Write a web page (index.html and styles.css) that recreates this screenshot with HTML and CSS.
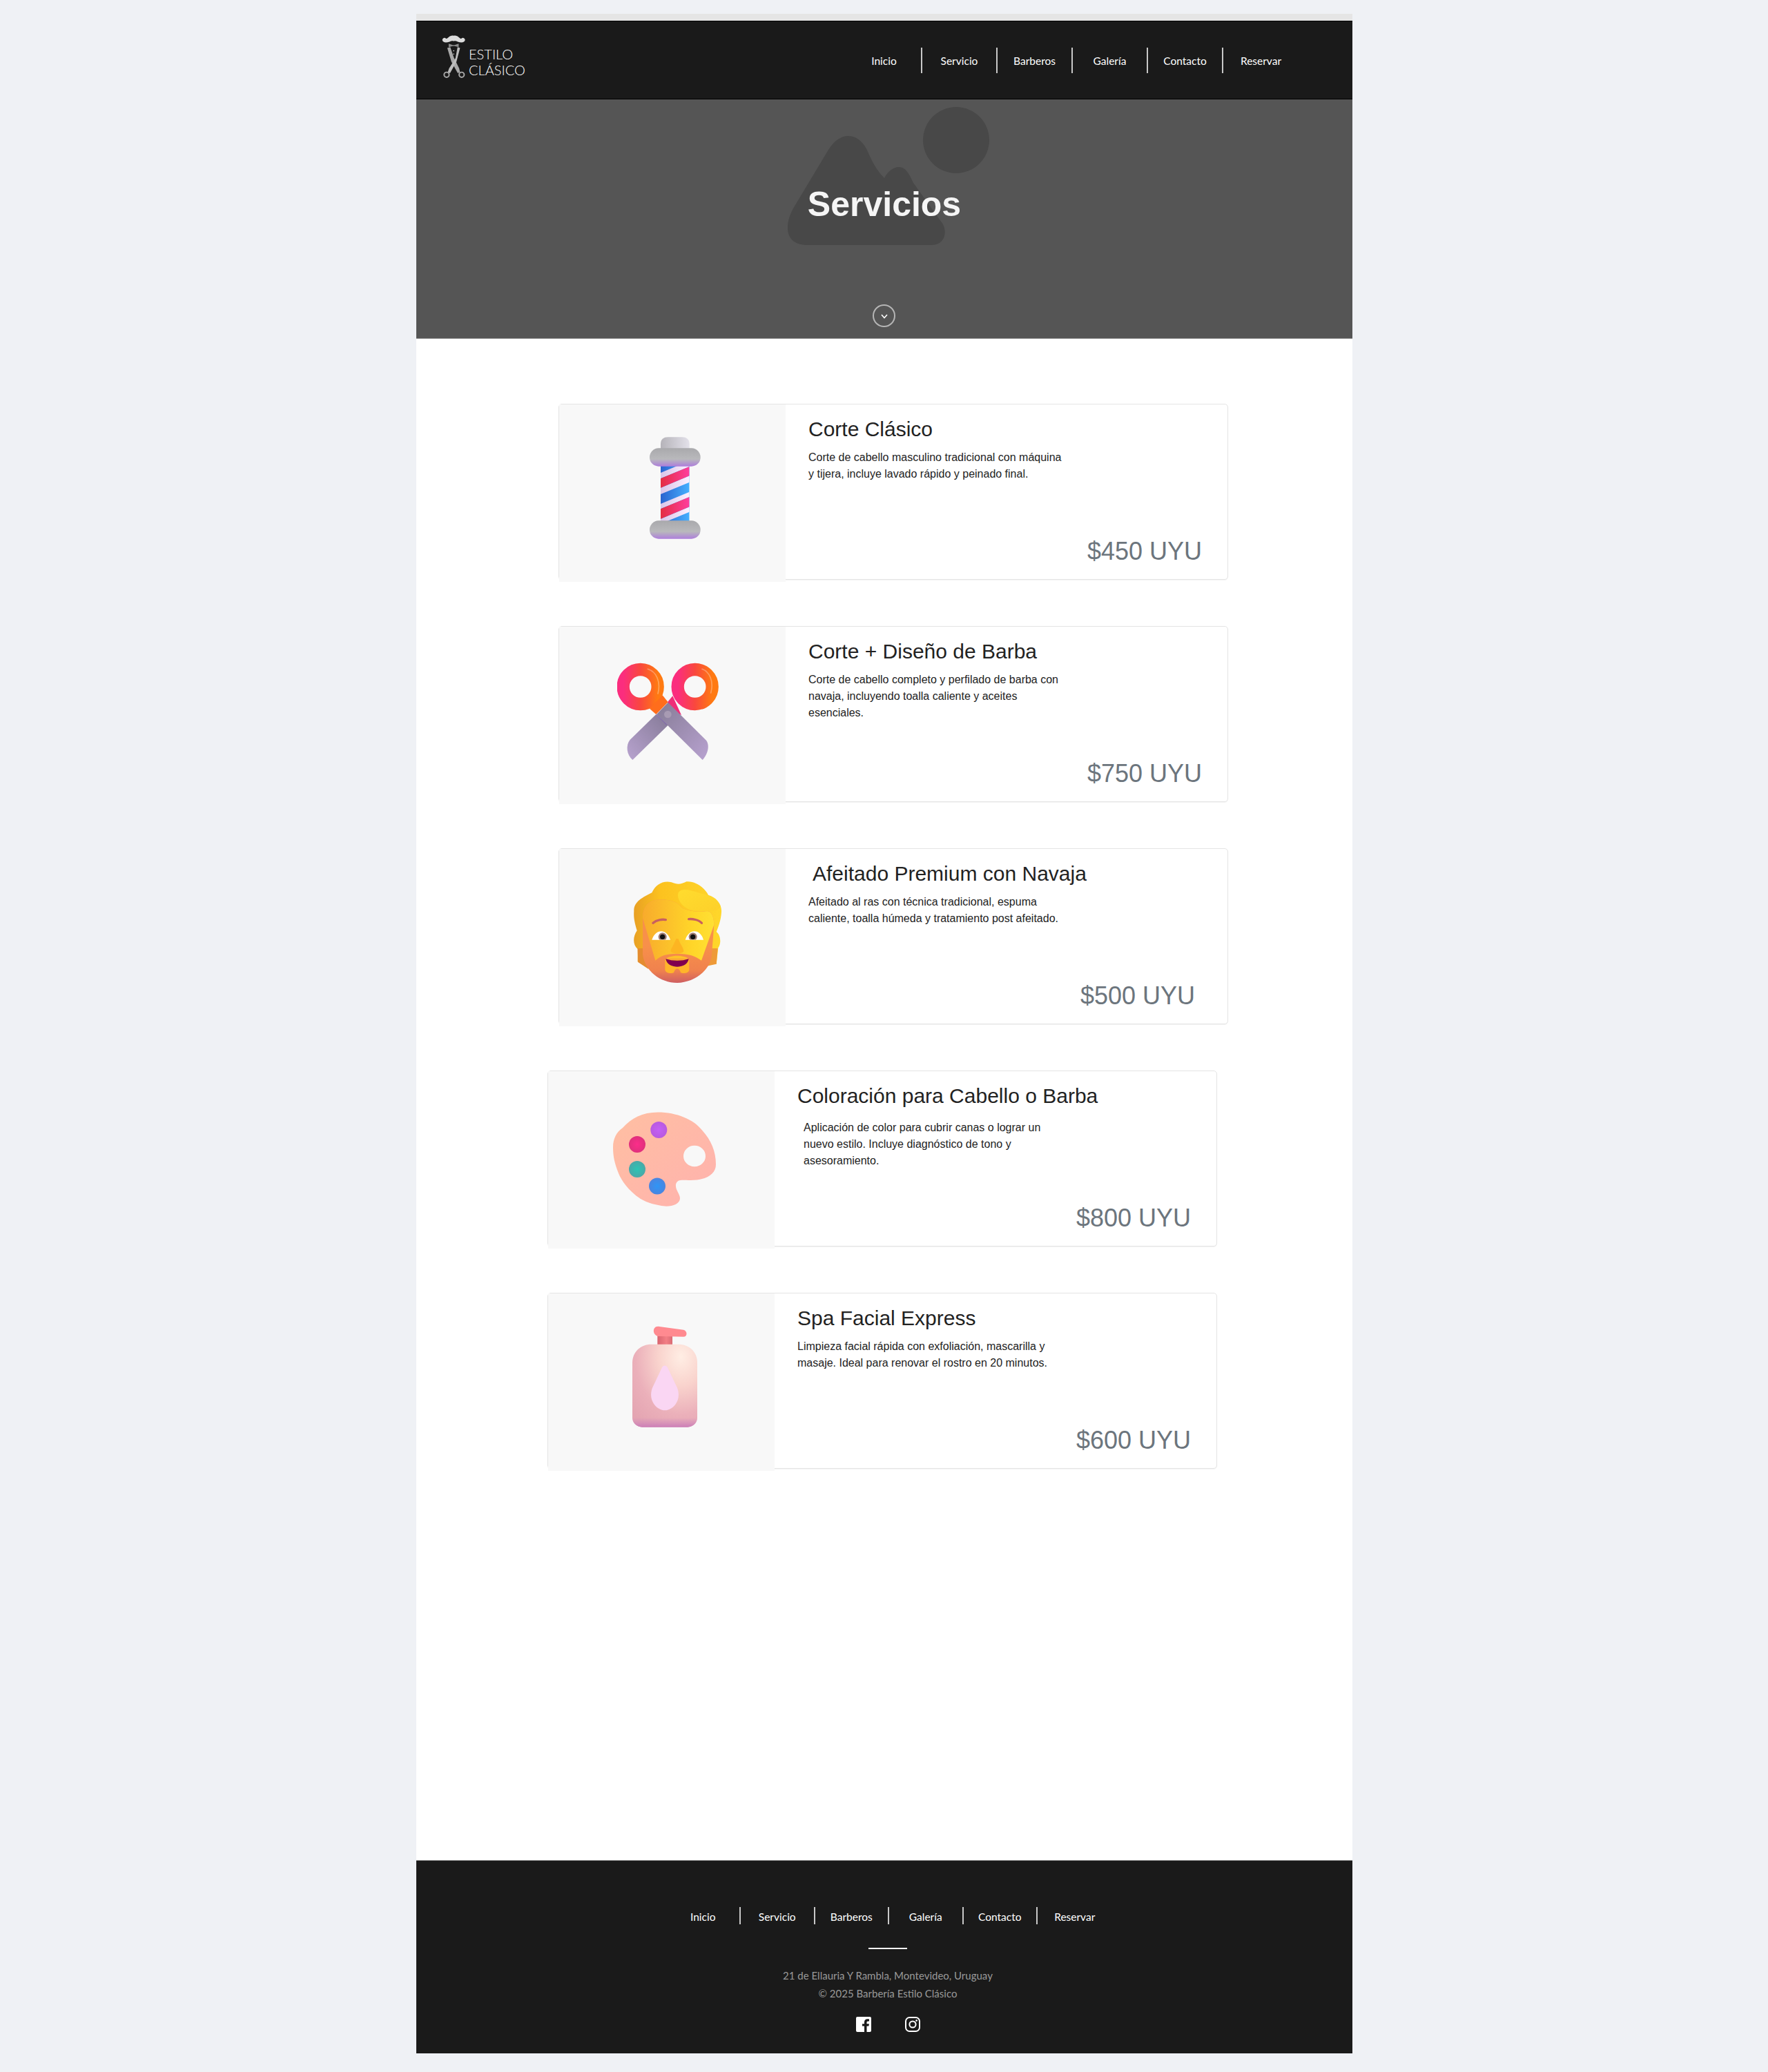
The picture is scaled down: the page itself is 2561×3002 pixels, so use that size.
FILE: index.html
```html
<!DOCTYPE html>
<html lang="es">
<head>
    <meta charset="UTF-8">
    <meta name="viewport" content="width=device-width, initial-scale=1.0">
    <title>Servicios</title>
    <link rel="stylesheet" href="styles.css">
</head>
<body>
    <div class="page">
        <header class="site-header">
            <a class="brand" href="#">
                <svg class="brand-mark" viewBox="60 58 106 194" aria-hidden="true">
                    <path fill="#dcdcdc" d="M62 80C66 68 74 70 78 74C86 78 92 58 112 62C132 58 138 78 146 74C150 70 158 68 162 80C160 92 146 94 130 88C122 84 116 84 112 86C108 84 102 84 94 88C78 94 64 92 62 80Z"/>
                    <path fill="#8c8c8c" d="M90 97L108 103L116 103L134 97L134 112L116 107L108 107L90 112Z"/>
                    <path fill="#a8a8a8" d="M84 116L97 112L113 158L136 205L140 222L130 226L102 176Z"/>
                    <path fill="#bdbdbd" d="M140 116L129 112L120 160L92 205L86 222L96 226L124 176Z"/>
                    <circle cx="112" cy="128" r="2.5" fill="#dcdcdc"/>
                    <circle cx="112" cy="142" r="2.5" fill="#dcdcdc"/>
                    <circle cx="81" cy="233" r="11" fill="none" stroke="#a8a8a8" stroke-width="6"/>
                    <circle cx="147" cy="233" r="11" fill="none" stroke="#a8a8a8" stroke-width="6"/>
                </svg>
                <span class="brand-name">ESTILO<br>CLÁSICO</span>
            </a>
            <nav class="main-nav">
                <a href="#">Inicio</a>
                <a href="#">Servicio</a>
                <a href="#">Barberos</a>
                <a href="#">Galería</a>
                <a href="#">Contacto</a>
                <a href="#">Reservar</a>
            </nav>
        </header>

        <section class="hero">
            <svg class="hero-placeholder" viewBox="1130 150 310 210" aria-hidden="true">
                <path d="M1170 355C1150 355 1141 345 1141 330C1141 318 1145 310 1149 302L1200 217C1208 204 1218 197 1229 197C1242 197 1252 207 1258 222C1266 240 1273 250 1281 258C1285 250 1293 242 1302 242C1312 242 1317 252 1323 265L1366 325C1373 340 1366 355 1350 355Z"/>
                <ellipse cx="1385" cy="203" rx="48" ry="48"/>
            </svg>
            <h1>Servicios</h1>
            <a class="scroll-down" href="#servicios" aria-label="Bajar">
                <svg viewBox="0 0 16 16"><polyline points="4,6 8,10.5 12,6"/></svg>
            </a>
        </section>

        <main class="services" id="servicios">
            <article class="card card-shift">
                <div class="card-img">
                    <svg viewBox="99 45 480 480" aria-hidden="true">
                        <defs>
                            <linearGradient id="capG" x1="0" x2="1" y1="0" y2="0"><stop offset="0" stop-color="#b5b3b9"/><stop offset="1" stop-color="#e3e1ea"/></linearGradient>
                            <linearGradient id="ringG" x1="0" x2="0" y1="0" y2="1"><stop offset="0" stop-color="#a9a9ac"/><stop offset=".6" stop-color="#b9b9bc"/><stop offset="1" stop-color="#ad7edb"/></linearGradient>
                            <linearGradient id="blueG" x1="0" x2="1" y1="0" y2="0"><stop offset="0" stop-color="#2b63cf"/><stop offset="1" stop-color="#46b0ff"/></linearGradient>
                            <linearGradient id="redG" x1="0" x2="1" y1="0" y2="0"><stop offset="0" stop-color="#e32d42"/><stop offset="1" stop-color="#ff3d9e"/></linearGradient>
                            <linearGradient id="paleG" x1="0" x2="1" y1="0" y2="0"><stop offset="0" stop-color="#d9c5e8"/><stop offset="1" stop-color="#fdf0ff"/></linearGradient>
                            <clipPath id="shaftClip"><rect x="288" y="190" width="125" height="250"/></clipPath>
                        </defs>
                        <path fill="url(#capG)" d="M288 125V100C288 80 300 70 320 70H381C401 70 413 80 413 100V125Z"/>
                        <g clip-path="url(#shaftClip)">
                            <rect x="288" y="190" width="125" height="250" fill="url(#blueG)"/>
                            <path fill="url(#paleG)" d="M288 225L413 173V198L288 250ZM288 290L413 238V266L288 318ZM288 360L413 308V330L288 382ZM288 425L413 373V395L288 447Z"/>
                            <path fill="url(#redG)" d="M288 250L413 198V238L288 290ZM288 382L413 330V373L288 425Z"/>
                        </g>
                        <rect x="240" y="118" width="221" height="79" rx="39" fill="url(#ringG)"/>
                        <rect x="240" y="433" width="221" height="79" rx="39" fill="url(#ringG)"/>
                    </svg>
                </div>
                <div class="card-body">
                    <h3>Corte Clásico</h3>
                    <p class="desc">Corte de cabello masculino tradicional con máquina y tijera, incluye lavado rápido y peinado final.</p>
                    <p class="price">$450 UYU</p>
                </div>
            </article>

            <article class="card card-shift">
                <div class="card-img">
                    <svg viewBox="99 51 480 480" aria-hidden="true">
                        <defs>
                            <linearGradient id="handleG" x1="0" x2="1" y1="0" y2="0"><stop offset="0" stop-color="#fb2d7e"/><stop offset=".5" stop-color="#f9483e"/><stop offset="1" stop-color="#ff7a12"/></linearGradient>
                            <linearGradient id="bladeL" x1="1" x2="0" y1="0" y2="1"><stop offset="0" stop-color="#857a97"/><stop offset="1" stop-color="#b8a3cf"/></linearGradient>
                            <linearGradient id="bladeR" x1="0" x2="1" y1="0" y2="1"><stop offset="0" stop-color="#857b95"/><stop offset="1" stop-color="#b8a2d0"/></linearGradient>
                        </defs>
                        <path fill="#ef2e78" d="M340 235L378 318L335 300L318 262Z"/>
                        <circle cx="200" cy="195" r="75" fill="none" stroke="url(#handleG)" stroke-width="55"/>
                        <circle cx="437" cy="195" r="75" fill="none" stroke="url(#handleG)" stroke-width="55"/>
                        <path fill="none" stroke="#fff" stroke-opacity=".3" stroke-width="5" stroke-linecap="round" d="M232 118C268 130 290 170 276 225M468 118C500 130 520 170 506 222"/>
                        <path fill="#ff6d1c" d="M296 232L320 262L268 315L240 290Z"/>
                        <path fill="url(#bladeR)" d="M320 263L486 428C498 442 500 480 470 513L270 315Z"/>
                        <path fill="url(#bladeL)" d="M268 315L320 362L166 513C140 490 135 450 155 425Z"/>
                        <path fill="none" stroke="#7c5fb0" stroke-width="3" d="M270 316L314 360"/>
                        <circle cx="319" cy="315" r="16" fill="#a89bb3"/>
                    </svg>
                </div>
                <div class="card-body">
                    <h3>Corte + Diseño de Barba</h3>
                    <p class="desc">Corte de cabello completo y perfilado de barba con navaja, incluyendo toalla caliente y aceites esenciales.</p>
                    <p class="price">$750 UYU</p>
                </div>
            </article>

            <article class="card card-shift">
                <div class="card-img">
                    <svg viewBox="39 57 480 480" aria-hidden="true">
                        <defs>
                            <linearGradient id="hairG" x1="0" x2="1" y1="0" y2="0"><stop offset="0" stop-color="#e8a024"/><stop offset=".3" stop-color="#fcc21f"/><stop offset="1" stop-color="#ffd72b"/></linearGradient>
                            <linearGradient id="lockG" x1="0" x2="1" y1="0" y2="1"><stop offset="0" stop-color="#ffdc2e"/><stop offset="1" stop-color="#fdd02a"/></linearGradient>
                            <linearGradient id="beardG" x1="0" x2="0" y1="0" y2="1"><stop offset=".55" stop-color="#f8904a"/><stop offset=".85" stop-color="#f0824e"/><stop offset="1" stop-color="#cf5f62"/></linearGradient>
                            <linearGradient id="skinG" x1="0" x2="1" y1="0" y2="0"><stop offset="0" stop-color="#f8ab2c"/><stop offset=".7" stop-color="#ffd629"/><stop offset="1" stop-color="#ffe033"/></linearGradient>
                            <clipPath id="eyeL"><path d="M190 335C205 285 255 285 270 335Z"/></clipPath>
                            <clipPath id="eyeR"><path d="M335 335C350 285 400 285 414 335Z"/></clipPath>
                        </defs>
                        <path fill="url(#hairG)" d="M112 210C110 170 150 150 190 130C205 95 240 75 275 85C300 95 315 95 340 82C380 78 420 110 435 140C470 150 495 180 492 215C490 250 478 280 470 300C485 310 495 345 478 370L470 440L430 440L180 460L128 430L128 375C105 355 108 320 125 295C115 260 110 240 112 210Z"/>
                        <path fill="#e48c30" d="M128 372L155 372L175 462L130 432Z"/>
                        <path fill="#ee9a38" d="M445 372L476 372L470 440L425 450Z"/>
                        <path fill="url(#beardG)" d="M150 240C150 190 175 160 230 160C270 160 300 170 320 195C345 212 400 215 430 210C450 210 460 240 460 270L450 400C445 470 370 522 300 522C225 522 160 470 150 400Z"/>
                        <path fill="url(#skinG)" d="M150 240C150 190 175 160 230 160C270 160 300 170 320 195C345 212 400 215 430 210C450 210 460 240 460 270L405 425C380 405 350 395 300 395C250 395 225 405 205 425Z"/>
                        <path fill="url(#lockG)" d="M305 130C315 110 350 115 390 130C430 140 470 150 488 190C480 215 430 210 400 210C360 212 330 195 315 175C305 160 300 145 305 130Z"/>
                        <path fill="#ffb52a" d="M247 420L247 465C250 482 275 482 285 478C290 455 310 455 315 478C325 482 350 482 352 465L352 420Z"/>
                        <path fill="#ffc028" d="M250 418C270 400 330 400 350 418Z"/>
                        <path fill="#80004f" d="M250 418C280 428 320 428 350 418C345 445 320 452 300 452C280 452 255 445 250 418Z"/>
                        <path fill="none" stroke="#c8605f" stroke-width="10" stroke-linecap="round" d="M195 262C210 248 235 245 250 248M350 245C365 243 395 248 406 262"/>
                        <path fill="#fff" d="M190 335C205 285 255 285 270 335Z"/>
                        <path fill="#fff" d="M335 335C350 285 400 285 414 335Z"/>
                        <g clip-path="url(#eyeL)"><circle cx="236" cy="322" r="18" fill="#9c7a70"/><circle cx="236" cy="322" r="11" fill="#111"/></g>
                        <g clip-path="url(#eyeR)"><circle cx="368" cy="322" r="18" fill="#9c7a70"/><circle cx="368" cy="322" r="11" fill="#111"/></g>
                        <path fill="#fdb522" d="M295 330C285 360 270 375 272 385C280 398 320 398 328 385C328 370 310 350 305 330Z"/>
                    </svg>
                </div>
                <div class="card-body">
                    <h3 class="title-nudge">Afeitado Premium con Navaja</h3>
                    <p class="desc">Afeitado al ras con técnica tradicional, espuma caliente, toalla húmeda y tratamiento post afeitado.</p>
                    <p class="price price-nudge">$500 UYU</p>
                </div>
            </article>

            <article class="card">
                <div class="card-img">
                    <svg viewBox="878 1591 160 160" aria-hidden="true">
                        <defs>
                            <linearGradient id="paletteG" x1="0" x2="1" y1="0" y2="1"><stop offset="0" stop-color="#ffbfa2"/><stop offset="1" stop-color="#ffb2ae"/></linearGradient>
                            <radialGradient id="dotP"><stop offset="0" stop-color="#c45ff5"/><stop offset="1" stop-color="#b85ae0"/></radialGradient>
                            <radialGradient id="dotK"><stop offset="0" stop-color="#fb2d8a"/><stop offset="1" stop-color="#e0307c"/></radialGradient>
                            <radialGradient id="dotT"><stop offset="0" stop-color="#2cc4b4"/><stop offset="1" stop-color="#4aa8a8"/></radialGradient>
                            <radialGradient id="dotB"><stop offset="0" stop-color="#2f95f5"/><stop offset="1" stop-color="#4a85e0"/></radialGradient>
                        </defs>
                        <path fill="url(#paletteG)" fill-rule="evenodd" d="M953 1611.6C980 1611.6 1005 1622 1017 1637.6C1030 1652 1037 1668 1037 1687C1037 1702 1022 1710 1000 1710C988 1710 981 1708 979 1716C978 1724 985 1730 985 1736C985 1744 975 1748 963 1747.6C950 1746 938 1743 928 1737C910 1725 900 1710 896 1700C890 1685 888 1675 888 1662C888 1650 893 1640 902 1634C915 1620 930 1611.6 953 1611.6ZM1006 1659.7A16 15.3 0 1 0 1006 1690.3A16 15.3 0 1 0 1006 1659.7Z"/>
                        <circle cx="954.3" cy="1637" r="12" fill="url(#dotP)"/>
                        <circle cx="923" cy="1658" r="12" fill="url(#dotK)"/>
                        <circle cx="923" cy="1694" r="12" fill="url(#dotT)"/>
                        <circle cx="952" cy="1718.5" r="12" fill="url(#dotB)"/>
                    </svg>
                </div>
                <div class="card-body">
                    <h3>Coloración para Cabello o Barba</h3>
                    <p class="desc desc-nudge">Aplicación de color para cubrir canas o lograr un nuevo estilo. Incluye diagnóstico de tono y asesoramiento.</p>
                    <p class="price">$800 UYU</p>
                </div>
            </article>

            <article class="card">
                <div class="card-img">
                    <svg viewBox="54 39 480 480" aria-hidden="true">
                        <defs>
                            <linearGradient id="neckG" x1="0" x2="1" y1="0" y2="0"><stop offset="0" stop-color="#d8646f"/><stop offset=".6" stop-color="#f37f85"/><stop offset="1" stop-color="#d96b74"/></linearGradient>
                            <radialGradient id="soapG" cx=".75" cy=".15" r="1"><stop offset="0" stop-color="#ffeee4"/><stop offset=".35" stop-color="#f9d3cd"/><stop offset=".7" stop-color="#ebb0ba"/><stop offset="1" stop-color="#e4a5b2"/></radialGradient>
                            <linearGradient id="soapEdge" x1="0" x2="0" y1="0" y2="1"><stop offset="0" stop-color="#cc85bb" stop-opacity="0"/><stop offset="1" stop-color="#cc7fb8"/></linearGradient>
                        </defs>
                        <rect x="277" y="100" width="65" height="48" fill="url(#neckG)"/>
                        <path fill="#ff8a90" d="M280 65L390 80C408 84 408 110 390 110L285 108C255 108 252 65 280 65Z"/>
                        <path fill="url(#soapG)" d="M168 223C168 175 205 143 250 143H368C415 143 450 175 450 223V463C450 485 430 503 408 503H210C188 503 168 485 168 463Z"/>
                        <path fill="url(#soapEdge)" d="M168 462V463C168 485 188 503 210 503H408C430 503 450 485 450 463V462Z"/>
                        <path fill="#fad6f3" d="M297 244C303 233 315 233 321 244L362 330C385 385 345 430 309 430C273 430 233 385 256 330Z"/>
                    </svg>
                </div>
                <div class="card-body">
                    <h3>Spa Facial Express</h3>
                    <p class="desc">Limpieza facial rápida con exfoliación, mascarilla y masaje. Ideal para renovar el rostro en 20 minutos.</p>
                    <p class="price">$600 UYU</p>
                </div>
            </article>
        </main>

        <footer class="site-footer">
            <nav class="footer-nav">
                <a href="#">Inicio</a>
                <a href="#">Servicio</a>
                <a href="#">Barberos</a>
                <a href="#">Galería</a>
                <a href="#">Contacto</a>
                <a href="#">Reservar</a>
            </nav>
            <hr class="footer-rule">
            <p class="footer-text">21 de Ellauria Y Rambla, Montevideo, Uruguay</p>
            <p class="footer-text">© 2025 Barbería Estilo Clásico</p>
            <div class="social">
                <a href="#" aria-label="Facebook">
                    <svg viewBox="0 0 22 22"><path fill="#fff" d="M2 0H20A2 2 0 0 1 22 2V20A2 2 0 0 1 20 22H15.5V13.6H18.4L18.9 10.3H15.5V8.2C15.5 7.2 16 6.4 17.3 6.4H19V3.5C18.4 3.4 17.4 3.3 16.4 3.3C13.8 3.3 12 4.9 12 7.8V10.3H9V13.6H12V22H2A2 2 0 0 1 0 20V2A2 2 0 0 1 2 0Z"/></svg>
                </a>
                <a href="#" aria-label="Instagram">
                    <svg viewBox="0 0 22 22"><rect x="1" y="1" width="20" height="20" rx="5.5" fill="none" stroke="#fff" stroke-width="2"/><circle cx="11" cy="11" r="4.6" fill="none" stroke="#fff" stroke-width="2"/><circle cx="16.6" cy="5.4" r="1.3" fill="#fff"/></svg>
                </a>
            </div>
        </footer>
    </div>
</body>
</html>
```

FILE: styles.css
```css
body {
    margin: 0;
    background-color: #eff1f5;
    font-family: 'Liberation Sans', Arial, sans-serif;
    min-height: 3002px;
}

a {
    text-decoration: none;
}

.page {
    width: 1356px;
    margin: 20px 0 0 603px;
    border-top: 10px solid #e5e5e5;
    background-color: #fff;
}

/* header */
.site-header {
    display: flex;
    align-items: center;
    height: 112px;
    padding: 0 78px 0 37px;
    background-color: #1a1a1a;
    border-top: 1px solid #000;
    border-bottom: 1px solid #000;
}

.brand {
    display: flex;
    align-items: flex-end;
    gap: 4px;
    margin-top: -10px;
}

.brand-mark {
    width: 35px;
    height: 65px;
}

.brand-name {
    font-family: Lato, sans-serif;
    font-weight: 300;
    font-size: 20px;
    line-height: 23px;
    color: #fff;
    padding-bottom: 2px;
}

.main-nav {
    display: flex;
    margin-left: auto;
}

.main-nav a,
.footer-nav a {
    font-family: Lato, sans-serif;
    font-size: 15.5px;
    color: #fff;
    text-align: center;
    border-right: 2px solid #c8c8c8;
    box-sizing: border-box;
}

.main-nav a {
    width: 109px;
    height: 37px;
    line-height: 38px;
}

.main-nav a:last-child,
.footer-nav a:last-child {
    border-right: none;
}

/* hero */
.hero {
    position: relative;
    height: 347px;
    padding-top: 123px;
    box-sizing: border-box;
    background-color: #555;
    border-bottom: 1px solid #999;
    overflow: hidden;
}

.hero h1 {
    position: relative;
    margin: 0;
    font-size: 50px;
    line-height: 58px;
    font-weight: bold;
    color: #f5f5f5;
    text-align: center;
}

.hero-placeholder {
    position: absolute;
    left: 527px;
    top: 6px;
    width: 310px;
    height: 210px;
    fill: #484848;
}

.scroll-down {
    position: absolute;
    left: 661px;
    top: 297px;
    width: 33px;
    height: 33px;
    border: 2px solid #b5b5b5;
    border-radius: 50%;
    box-sizing: border-box;
    display: flex;
    align-items: center;
    justify-content: center;
}

.scroll-down svg {
    width: 16px;
    height: 16px;
    fill: none;
    stroke: #fff;
    stroke-width: 1.6;
}

/* service cards */
.services {
    display: flex;
    flex-direction: column;
    gap: 67px;
    height: 2204px;
    padding: 94px 0 0 190px;
    box-sizing: border-box;
}

.card {
    display: flex;
    width: 970px;
    height: 255px;
    box-sizing: border-box;
    border: 1px solid #e4e4e4;
    border-radius: 5px;
    box-shadow: 0 1px 1px rgba(0, 0, 0, 0.05);
}

.card-shift {
    margin-left: 16px;
}

.card-img {
    flex: 0 0 328px;
    height: 257px;
    padding-top: 39px;
    box-sizing: border-box;
    background-color: #f8f8f8;
    display: flex;
    justify-content: center;
    align-items: flex-start;
}

.card-img svg {
    width: 160px;
    height: 160px;
}

.card-body {
    flex: 1;
    display: flex;
    flex-direction: column;
    padding: 18px 37px 20px 33px;
    box-sizing: border-box;
}

.card-body h3 {
    margin: 0 0 11px;
    font-size: 30px;
    line-height: 36px;
    font-weight: normal;
    color: #222;
}

.desc {
    margin: 0;
    width: 372px;
    font-size: 16px;
    line-height: 24px;
    color: #222;
}

.price {
    margin: auto 0 0;
    font-size: 36px;
    line-height: 41px;
    color: #6c757d;
    text-align: right;
}

.title-nudge {
    margin-left: 6px !important;
}

.price-nudge {
    margin-right: 10px;
}

.desc-nudge {
    margin-left: 9px;
    margin-top: 5px;
}

/* footer */
.site-footer {
    height: 280px;
    padding: 67px 0 0 10px;
    box-sizing: border-box;
    background-color: #1a1a1a;
    border-top: 1px solid #888;
    text-align: center;
}

.footer-nav {
    display: flex;
    justify-content: center;
    margin-left: 4px;
}

.footer-nav a {
    width: 107.5px;
    height: 25px;
    line-height: 28px;
}

.footer-rule {
    width: 56px;
    height: 2px;
    margin: 34px auto 0;
    border: none;
    background-color: #fff;
}

.footer-text {
    margin: 0;
    font-family: Lato, sans-serif;
    font-size: 15px;
    line-height: 26px;
    color: #999;
}

.footer-rule + .footer-text {
    margin-top: 25px;
}

.social {
    display: flex;
    justify-content: center;
    gap: 49px;
    margin-top: 21px;
}

.social a {
    display: block;
    width: 22px;
    height: 22px;
}

.social svg {
    display: block;
    width: 22px;
    height: 22px;
}
```
